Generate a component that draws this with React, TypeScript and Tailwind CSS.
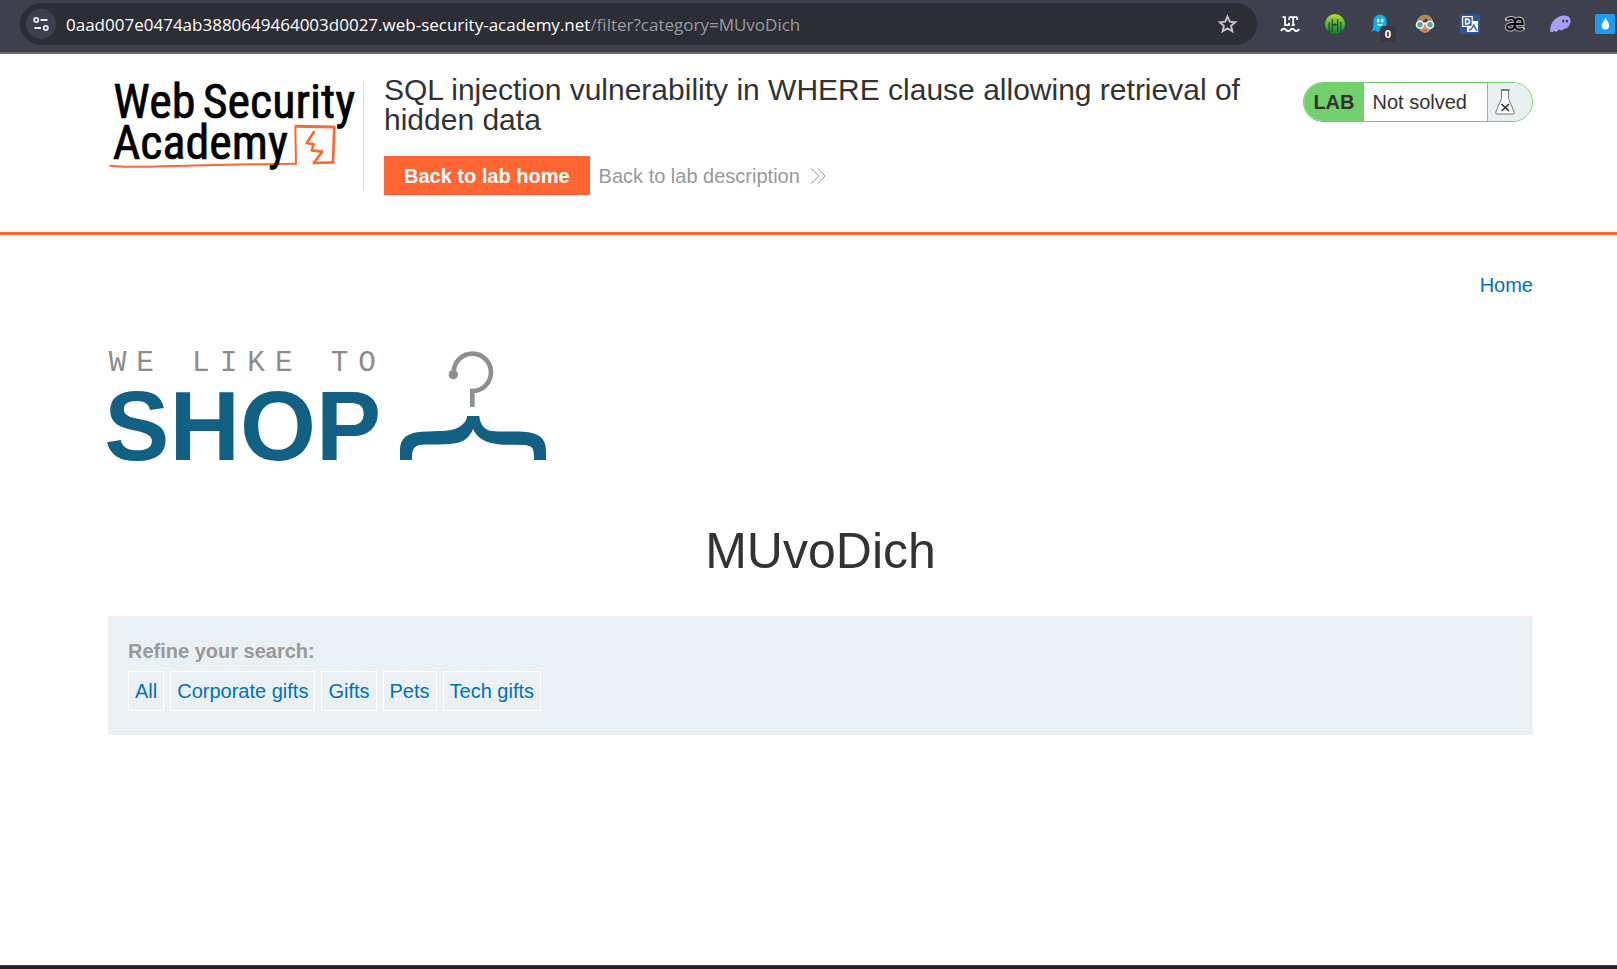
import React from 'react';

const categories = ['All', 'Corporate gifts', 'Gifts', 'Pets', 'Tech gifts'];

function TuneIcon() {
  return (
    <svg viewBox="0 0 16 16" className="size-4" fill="none" stroke="#e9e9ee" strokeWidth="1.8" aria-hidden="true">
      <circle cx="3.2" cy="4" r="2.1" />
      <path d="M7.5 4H14.5M1.5 12H8" />
      <circle cx="12.8" cy="12" r="2.1" />
    </svg>
  );
}

function StarIcon() {
  return (
    <svg viewBox="0 0 20 20" className="size-5" fill="none" stroke="#c3c3c8" strokeWidth="1.9" aria-hidden="true">
      <path d="M9.5 2.6L11.8 7.7L17.3 8.2L13.1 11.9L14.4 17.3L9.5 14.4L4.6 17.3L5.9 11.9L1.7 8.2L7.2 7.7Z" />
    </svg>
  );
}

function LanguageToolIcon() {
  return (
    <svg viewBox="0 0 20 20" className="size-5" fill="none" stroke="#fff" aria-hidden="true">
      <path d="M2.5 3.2H5V11.2H9V8.8M9.2 3.2H17.2M13.2 3V11.6M9.2 6V3.2M17.2 6V3.2M11.6 11.2H14.8" strokeWidth="1.8" />
      <path d="M1 17C2.5 14.2 4.5 14.4 6 16S9 17.4 10.4 15.8S13.5 14.8 14.6 16.2S17.6 17.4 19.2 15.2" strokeWidth="2" />
    </svg>
  );
}

function SoundIcon() {
  return (
    <svg viewBox="0 0 20 20" className="size-5" aria-hidden="true">
      <defs>
        <linearGradient id="sound" x1="0" y1="0" x2="0" y2="1">
          <stop offset="0" stopColor="#b9d930" />
          <stop offset="0.55" stopColor="#4cb53a" />
          <stop offset="1" stopColor="#16783a" />
        </linearGradient>
      </defs>
      <circle cx="10" cy="10" r="10" fill="url(#sound)" />
      <path d="M4.2 8V20M7.3 5V18M12.7 5V18M15.8 8V20M10 9V12.5M7.3 10.7H12.7" stroke="#204c30" strokeWidth="1.3" fill="none" />
    </svg>
  );
}

function BlueGhostIcon() {
  return (
    <svg viewBox="0 0 20 20" className="size-5" aria-hidden="true">
      <path d="M3.5 7A6.5 6.5 0 0 1 16.5 7V14L13 18L10 16.5L8 18.5L5 16L1 18Q4 14 3.5 7Z" fill="#0bb0f2" />
      <ellipse cx="8.2" cy="6.4" rx="1.3" ry="2" fill="#fff" />
      <ellipse cx="12.2" cy="6.4" rx="1.3" ry="2" fill="#fff" />
      <path d="M7.5 10Q10 12.5 12.5 10" stroke="#fff" strokeWidth="1.2" fill="none" />
    </svg>
  );
}

function FaceIcon() {
  return (
    <svg viewBox="0 0 20 20" className="size-5" aria-hidden="true">
      <path d="M3 8H17L15.5 16Q10 22 4.5 16Z" fill="#d98962" />
      <path d="M1.5 8.5Q3 0.5 10.5 0.8Q17 1 18.5 9Q14 8 11 4.5Q8 8 1.5 8.5Z" fill="#a98e5c" />
      <circle cx="5" cy="10.8" r="3.5" fill="#5aa3a8" stroke="#f2f7f7" strokeWidth="1.6" />
      <circle cx="15" cy="10.8" r="3.5" fill="#5aa3a8" stroke="#f2f7f7" strokeWidth="1.6" />
      <path d="M8.3 10Q10 9 11.7 10" stroke="#f2f7f7" strokeWidth="1.5" fill="none" />
      <path d="M8 16.5H12" stroke="#b1533e" />
    </svg>
  );
}

function TranslateIcon() {
  return (
    <svg viewBox="0 0 20 20" className="size-5" aria-hidden="true">
      <rect width="20" height="20" rx="3" fill="#33549c" />
      <path d="M9 7H18V18H7V14Z" fill="#fff" />
      <rect x="2.6" y="2.6" width="9.6" height="9.8" fill="#33549c" stroke="#fff" strokeWidth="1.2" />
      <path d="M5.6 5V10H7Q9.4 10 9.4 7.5T7 5Z" fill="none" stroke="#fff" strokeWidth="1.5" />
      <path d="M13.4 10.2L16.8 17M13.4 11.6Q12.6 14.6 9 16.4" fill="none" stroke="#33549c" strokeWidth="1.4" />
    </svg>
  );
}

function AeIcon() {
  const outline =
    'M2 5.2Q9.6 1.8 9.8 8V12Q8.5 16 4.6 15.6Q1.4 15 2 12.2Q3 9.8 9.8 9.8H17.6Q17.6 4.6 13.8 4.6Q9.8 5 9.8 10Q10 15.6 14 15.6Q16.4 15.6 18 14.6';
  return (
    <svg viewBox="0 0 20 20" className="size-5 overflow-visible" fill="none" aria-hidden="true">
      <path d={outline} stroke="#c4c4c8" strokeWidth="4" strokeLinecap="round" />
      <path d={outline} stroke="#0b0b0d" strokeWidth="2.2" />
    </svg>
  );
}

function PurpleGhostIcon() {
  return (
    <svg viewBox="0 0 20 20" className="size-5 overflow-visible" aria-hidden="true">
      <path d="M0 17.5Q0 8 6.5 4Q13 0 18.5 2.5Q22 6 19.8 10.5Q18.5 14 16 14.5Q14 14 13.5 15.5Q11 17.5 9.5 15.5Q8.5 15.5 7 17.5Q5.5 18.5 4.5 16.8Q3 18.8 0 17.5Z" fill="#ab9ff2" />
      <ellipse cx="13.3" cy="7" rx="1.1" ry="1.5" fill="#3d3d49" />
      <ellipse cx="17" cy="7" rx="1.1" ry="1.5" fill="#3d3d49" />
    </svg>
  );
}

function DropIcon() {
  return (
    <svg viewBox="0 0 20 20" className="size-5" aria-hidden="true">
      <rect width="20" height="20" rx="2" fill="#1d9bf0" />
      <path d="M10.5 4Q14.2 9 14.2 11.8A3.8 3.8 0 0 1 6.6 11.8Q7 9 10.5 4Z" fill="#fff" />
    </svg>
  );
}

function BrowserBar() {
  return (
    <div className="flex h-[54px] items-start border-b-2 border-[#6b6a76] bg-[#3f404d] pt-[3px] pr-0.5 pl-5">
      <div className="mr-[23px] flex h-[42px] min-w-0 flex-1 items-center rounded-full bg-[#2d2d35] pr-[19px] pl-1.5">
        <button aria-label="View site information" className="flex size-[30px] shrink-0 items-center justify-center rounded-full bg-[#3f404d]">
          <TuneIcon />
        </button>
        <p className="ml-2.5 min-w-0 flex-1 truncate pt-0.5 font-['Open_Sans','Noto_Sans',sans-serif] text-[17px] text-[#9a9aa1]">
          <span className="text-white">0aad007e0474ab3880649464003d0027.web-security-academy.net</span>/filter?category=MUvoDich
        </p>
        <button aria-label="Bookmark this tab"><StarIcon /></button>
      </div>
      <div className="flex h-[42px] items-center gap-[25px]">
        <button aria-label="Grammar"><LanguageToolIcon /></button>
        <button aria-label="Sound"><SoundIcon /></button>
        <button aria-label="Blocked trackers" className="relative">
          <BlueGhostIcon />
          <span className="absolute top-3 left-2.5 flex size-4 items-center justify-center rounded bg-[#38383e] font-['Open_Sans',sans-serif] text-[11px] font-bold text-white">0</span>
        </button>
        <button aria-label="Profile"><FaceIcon /></button>
        <button aria-label="Translate"><TranslateIcon /></button>
        <button aria-label="Dictionary"><AeIcon /></button>
        <button aria-label="Wallet"><PurpleGhostIcon /></button>
        <button aria-label="Colour"><DropIcon /></button>
      </div>
    </div>
  );
}

function AcademyLogo() {
  return (
    <svg viewBox="24 36 756 270" className="h-[90px] w-[252px] overflow-visible" role="img" aria-label="Web Security Academy">
      <g fill="none" stroke="#ff6633" strokeLinejoin="round">
        <path d="M28 287Q90 292 150 290T350 285T586 281" strokeWidth="6" />
        <path d="M588 284L586 172" strokeWidth="6" />
        <path d="M584 169L704 171" strokeWidth="9" />
        <path d="M703 168L699 280" strokeWidth="8" />
        <path d="M702 277L638 279" strokeWidth="8" />
        <path d="M643 184L620 219L641 223L635 241L667 245L641 279" strokeWidth="8" />
      </g>
      <g fill="#000" stroke="#000" strokeWidth="2" fontSize="144" fontFamily="'Liberation Sans Narrow', 'Roboto Condensed', Roboto, sans-serif">
        <text x="40" y="144">Web</text>
        <text x="308" y="144">Security</text>
        <text x="38" y="266">Academy</text>
      </g>
    </svg>
  );
}

function FlaskIcon() {
  return (
    <svg viewBox="0 0 20 26" className="h-[26px] w-5" fill="none" aria-hidden="true">
      <path d="M6.5 1.5V9.5L0.8 23Q0.4 25 2 25H18Q19.6 25 19.2 23L13.5 9.5V1.5" stroke="#777" fill="#fff" />
      <path d="M6 1H14.5" stroke="#555" strokeWidth="1.6" />
      <path d="M6.5 15L14 22M14 15L6.5 22" stroke="#333332" strokeWidth="1.6" />
    </svg>
  );
}

function LabHeader() {
  return (
    <header className="border-b-[3px] border-[#ff6633] pt-[21px] pr-[84px] pb-[37px] pl-[108px]">
      <div className="flex items-start">
        <a href="#academy" className="mt-[7px] block h-[108px] w-64 shrink-0 border-r border-[#dcdcdc]">
          <AcademyLogo />
        </a>
        <div className="ml-5 min-w-0 flex-1">
          <h2 className="text-[30px] leading-[30px]">SQL injection vulnerability in WHERE clause allowing retrieval of hidden data</h2>
          <div className="mt-[21px] flex items-center">
            <a href="#lab-home" className="flex h-[39px] items-center bg-[#ff6633] px-5 font-bold text-white">Back to lab home</a>
            <a href="#description" className="ml-[9px] flex items-center gap-2.5 text-[#999]">
              Back to lab description
              <svg viewBox="0 0 16 16" className="size-4" fill="none" stroke="#999" aria-hidden="true">
                <path d="M1.5 0.5L8.5 8L1.5 15.5M8 0.5L15 8L8 15.5" />
              </svg>
            </a>
          </div>
        </div>
        <div className="mt-[7px] flex h-10 shrink-0 overflow-hidden rounded-full border border-[#6fd06b] bg-white">
          <span className="flex items-center bg-[#72d16c] px-[9px] font-bold">LAB</span>
          <p className="flex items-center pr-5 pl-[9px]">Not solved</p>
          <span className="flex items-center border-l border-[#6fd06b] bg-[#eaeff2] pr-[17px] pl-[7px]"><FlaskIcon /></span>
        </div>
      </div>
    </header>
  );
}

function ShopLogo() {
  return (
    <svg viewBox="24 30 1320 339" className="h-[113px] w-[440px] overflow-visible" role="img" aria-label="We like to shop">
      <text x="26 109 276 359 442 525 692 775" y="93" fontSize="88" fill="#8c8c8c" fontFamily="'Liberation Mono', monospace">WELIKETO</text>
      <text x="13" y="361" fontSize="293" fontWeight="bold" fill="#126185" fontFamily="'Liberation Sans', sans-serif">SHOP</text>
      <path d="M1061 97A56 56 0 1 1 1117 153V201" fill="none" stroke="#8f8f91" strokeWidth="14" />
      <circle cx="1060" cy="104" r="14" fill="#8f8f91" />
      <path
        fill="#126185"
        d="M900 360V330C900 292 925 278 965 275C1020 273 1050 275 1070 265C1095 252 1100 240 1101 228H1138C1140 250 1150 268 1170 272C1200 276 1240 274 1270 275C1315 277 1338 295 1338 330V360H1302C1302 325 1300 317 1270 315C1235 314 1200 316 1170 308C1145 300 1130 290 1119 267C1110 290 1095 302 1075 308C1040 315 1000 312 965 314C940 317 936 328 936 360Z"
      />
    </svg>
  );
}

export default function App() {
  return (
    <div className="flex min-h-screen flex-col bg-white font-['Liberation_Sans',Arial,sans-serif] text-[20px] leading-6 text-[#333332]">
      <BrowserBar />
      <LabHeader />
      <main className="flex-1 pt-[38px] pr-[84px] pb-10 pl-[108px]">
        <nav className="flex justify-end">
          <a href="#home" className="text-[#0071bc]">Home</a>
        </nav>
        <div className="mt-[53px]"><ShopLogo /></div>
        <h1 className="mt-[63px] text-center text-[50px] leading-[50px]">MUvoDich</h1>
        <section className="mt-10 bg-[#eaf0f3] px-5 pt-[23px] pb-6">
          <p className="font-bold text-[#999]">Refine your search:</p>
          <div className="mt-2 flex flex-wrap gap-1.5">
            {categories.map((name) => (
              <a key={name} href="#filter" className="flex h-10 items-center border border-white px-1.5 text-[#0071bc]">{name}</a>
            ))}
          </div>
        </section>
      </main>
      <div className="h-1 border-t border-[#4a444a] bg-[#2b1b29]" />
    </div>
  );
}
